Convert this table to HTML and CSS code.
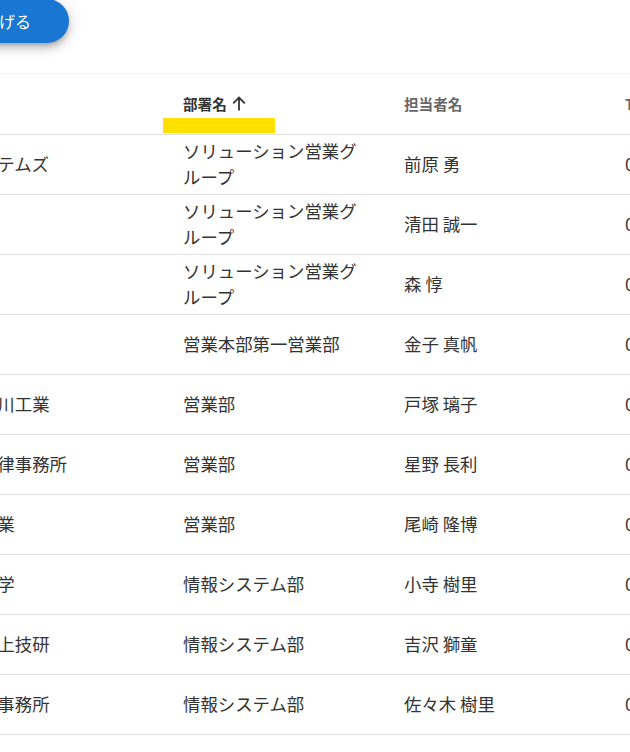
FILE: index.html
```html
<!DOCTYPE html>
<html lang="ja">
<head>
<meta charset="utf-8">
<title>顧客一覧</title>
<link rel="stylesheet" href="styles.css">
</head>
<body>
<div class="viewport">
  <div class="canvas">
    <div class="toolbar">
      <button class="fab">一覧を広げる</button>
    </div>
    <div class="paper">
      <table class="grid">
        <colgroup>
          <col class="c-company">
          <col class="c-col">
          <col class="c-col">
          <col class="c-col">
        </colgroup>
        <thead>
          <tr>
            <th>会社名</th>
            <th class="active">
              <span class="sort">部署名<svg class="arrow" viewBox="0 0 14 15" width="14" height="15"><path d="M7 14.5V1.5M1.2 7.3L7 1.5l5.8 5.8"/></svg></span>
              <span class="marker"></span>
            </th>
            <th>担当者名</th>
            <th>TEL</th>
          </tr>
        </thead>
        <tbody>
          <tr><td>日本情報システムズ</td><td>ソリューション営業グループ</td><td>前原 勇</td><td>03-3211-4567</td></tr>
          <tr><td>ABC商事</td><td>ソリューション営業グループ</td><td>清田 誠一</td><td>03-5512-8890</td></tr>
          <tr><td>丸山商店</td><td>ソリューション営業グループ</td><td>森 惇</td><td>06-6231-7745</td></tr>
          <tr><td>北都物産</td><td>営業本部第一営業部</td><td>金子 真帆</td><td>011-222-3344</td></tr>
          <tr><td>株式会社小早川工業</td><td>営業部</td><td>戸塚 璃子</td><td>045-671-2289</td></tr>
          <tr><td>さくら総合法律事務所</td><td>営業部</td><td>星野 長利</td><td>03-6803-1120</td></tr>
          <tr><td>東日本精密工業</td><td>営業部</td><td>尾崎 隆博</td><td>022-261-5530</td></tr>
          <tr><td>北海道情報大学</td><td>情報システム部</td><td>小寺 樹里</td><td>011-385-4411</td></tr>
          <tr><td>株式会社坂の上技研</td><td>情報システム部</td><td>吉沢 獅童</td><td>052-204-7781</td></tr>
          <tr><td>山本行政書士事務所</td><td>情報システム部</td><td>佐々木 樹里</td><td>092-711-3365</td></tr>
        </tbody>
      </table>
    </div>
  </div>
</div>
</body>
</html>
```
FILE: styles.css
```css
* { box-sizing: border-box; }
html, body {
  margin: 0;
  padding: 0;
  background: #fff;
}
body {
  font-family: "Noto Sans CJK JP", "Noto Sans", sans-serif;
  color: #333;
  overflow: hidden;
}
.viewport {
  width: 630px;
  height: 752px;
  overflow: hidden;
}
.canvas {
  margin-left: -127px;
  width: 1200px;
}
.toolbar {
  display: flex;
  height: 73px;
  align-items: flex-start;
}
.fab {
  margin-left: 40px;
  margin-top: -1px;
  height: 44px;
  padding: 0 38px 0 22px;
  border: none;
  border-radius: 22px;
  background: #1976d2;
  color: #fff;
  font-family: inherit;
  font-size: 16px;
  line-height: 44px;
  box-shadow: 0 3px 5px -1px rgba(0,0,0,0.2), 0 6px 10px 0 rgba(0,0,0,0.14), 0 1px 18px 0 rgba(0,0,0,0.12);
}
.paper {
  border-top: 1px solid #f4f4f4;
}
.grid {
  border-collapse: collapse;
  table-layout: fixed;
  width: 953px;
}
.c-company { width: 290px; }
.c-col { width: 221px; }
.grid th,
.grid td {
  padding: 0 20px;
  text-align: left;
  vertical-align: middle;
  border-bottom: 1px solid #e0e0e0;
  white-space: normal;
}
.grid th {
  height: 60px;
  font-size: 14.6px;
  font-weight: 700;
  color: #666;
  position: relative;
}
.grid th.active { color: #333; }
.sort {
  display: inline-flex;
  align-items: center;
  gap: 5px;
}
.arrow {
  flex: none;
  fill: none;
  stroke: #333;
  stroke-width: 1.8;
}
.marker {
  position: absolute;
  left: 0;
  bottom: 1px;
  width: 112px;
  height: 15px;
  background: #ffe100;
}
.grid td {
  height: 60px;
  font-size: 17.4px;
  line-height: 26px;
  color: #333;
}
```
